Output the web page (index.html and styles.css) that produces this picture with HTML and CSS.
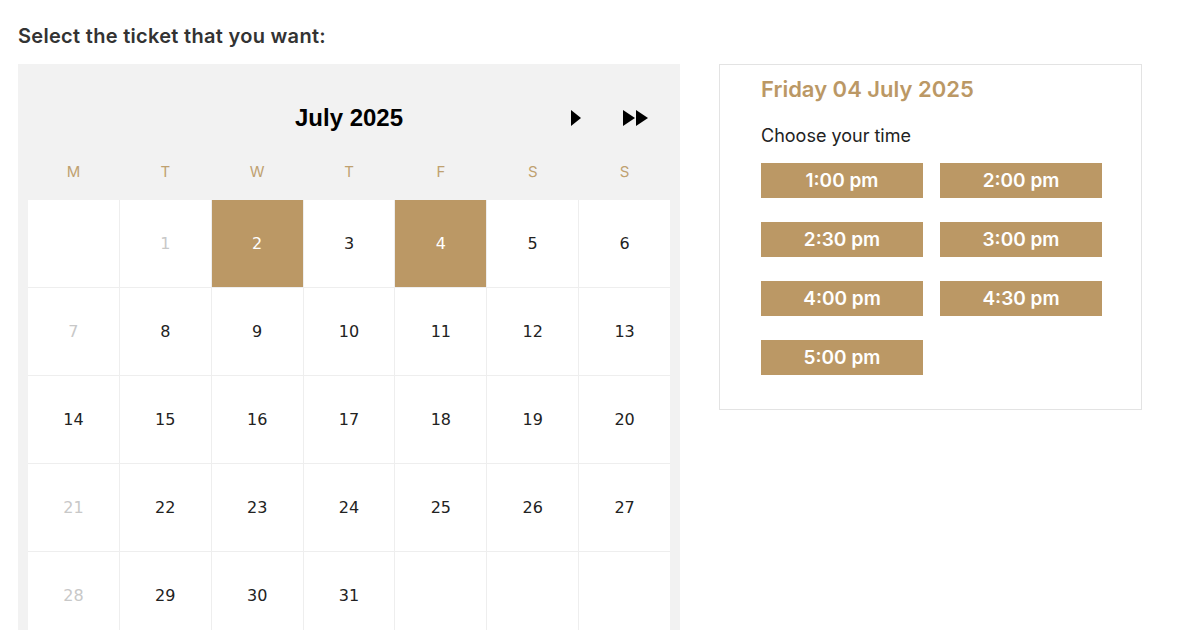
FILE: index.html
```html
<!DOCTYPE html>
<html lang="en">
<head>
    <meta charset="UTF-8">
    <meta name="viewport" content="width=device-width, initial-scale=1.0">
    <title>Tickets</title>
    <link rel="stylesheet" href="styles.css">
</head>
<body>
    <h3 class="page-title">Select the ticket that you want:</h3>

    <div class="booking">
        <div class="calendar">
            <div class="cal-header">
                <span></span>
                <h2 class="cal-month">July 2025</h2>
                <div class="cal-nav">
                    <button class="nav-btn" aria-label="Next month">
                        <svg width="10" height="16" viewBox="0 0 10 16"><path d="M0 0 L10 8 L0 16 Z" fill="#000"/></svg>
                    </button>
                    <button class="nav-btn" aria-label="Next year">
                        <svg width="25" height="16" viewBox="0 0 25 16"><path d="M0 0 L12 8 L0 16 Z M13 0 L25 8 L13 16 Z" fill="#000"/></svg>
                    </button>
                </div>
            </div>

            <div class="weekdays">
                <span>M</span><span>T</span><span>W</span><span>T</span><span>F</span><span>S</span><span>S</span>
            </div>

            <div class="days">
                <div class="day"></div>
                <div class="day disabled">1</div>
                <div class="day selected">2</div>
                <div class="day">3</div>
                <div class="day selected">4</div>
                <div class="day">5</div>
                <div class="day">6</div>

                <div class="day disabled">7</div>
                <div class="day">8</div>
                <div class="day">9</div>
                <div class="day">10</div>
                <div class="day">11</div>
                <div class="day">12</div>
                <div class="day">13</div>

                <div class="day">14</div>
                <div class="day">15</div>
                <div class="day">16</div>
                <div class="day">17</div>
                <div class="day">18</div>
                <div class="day">19</div>
                <div class="day">20</div>

                <div class="day disabled">21</div>
                <div class="day">22</div>
                <div class="day">23</div>
                <div class="day">24</div>
                <div class="day">25</div>
                <div class="day">26</div>
                <div class="day">27</div>

                <div class="day disabled">28</div>
                <div class="day">29</div>
                <div class="day">30</div>
                <div class="day">31</div>
                <div class="day"></div>
                <div class="day"></div>
                <div class="day"></div>
            </div>
        </div>

        <div class="times">
            <h2 class="times-date">Friday 04 July 2025</h2>
            <p class="times-label">Choose your time</p>
            <div class="slots">
                <button class="slot">1:00 pm</button>
                <button class="slot">2:00 pm</button>
                <button class="slot">2:30 pm</button>
                <button class="slot">3:00 pm</button>
                <button class="slot">4:00 pm</button>
                <button class="slot">4:30 pm</button>
                <button class="slot">5:00 pm</button>
            </div>
        </div>
    </div>
</body>
</html>
```

FILE: styles.css
```css
body {
    font-family: Inter, "Liberation Sans", sans-serif;
    margin: 0;
    padding: 24px 18px 0;
    background-color: #fff;
    color: #333;
}
.page-title {
    font-size: 20px;
    font-weight: 600;
    line-height: 24px;
    letter-spacing: 0.3px;
    margin: 0 0 16px;
    color: #333;
}
.booking {
    display: flex;
    align-items: flex-start;
    gap: 39px;
}

/* calendario */
.calendar {
    width: 662px;
    box-sizing: border-box;
    background-color: #f2f2f2;
    padding: 40px 10px 0;
}
.cal-header {
    display: grid;
    grid-template-columns: 1fr auto 1fr;
    align-items: center;
    height: 26px;
    margin-bottom: 16px;
}
.cal-month {
    margin: 0;
    font-family: "Liberation Sans", Arial, sans-serif;
    font-size: 24px;
    font-weight: 700;
    color: #000;
}
.cal-nav {
    display: flex;
    justify-content: flex-end;
    align-items: center;
    gap: 42px;
    padding-right: 22px;
}
.nav-btn {
    background: none;
    border: none;
    padding: 0;
    display: flex;
    cursor: pointer;
}
.weekdays {
    display: grid;
    grid-template-columns: repeat(7, 1fr);
    gap: 1px;
    height: 50px;
    align-items: center;
    margin-bottom: 4px;
}
.weekdays span {
    text-align: center;
    font-size: 15px;
    color: #bfa170;
}
.days {
    display: grid;
    grid-template-columns: repeat(7, 1fr);
    grid-auto-rows: 87px;
    gap: 1px;
    background-color: #eeeeee;
}
.day {
    background-color: #fff;
    display: flex;
    align-items: center;
    justify-content: center;
    font-family: "DejaVu Sans", Verdana, sans-serif;
    font-size: 16px;
    color: #222;
}
.day.disabled {
    color: #c8c8c8;
}
.day.selected {
    background-color: #bb9865;
    color: #fff;
}

/* horarios */
.times {
    width: 423px;
    box-sizing: border-box;
    border: 1px solid #e3e3e3;
    padding: 12px 40px 34px 41px;
}
.times-date {
    margin: 0;
    font-size: 22px;
    font-weight: 600;
    line-height: 24px;
    color: #bb9865;
}
.times-label {
    margin: 24px 0 16px;
    font-size: 18px;
    line-height: 22px;
    color: #222;
}
.slots {
    display: grid;
    grid-template-columns: 162px 162px;
    column-gap: 17px;
    row-gap: 24px;
}
.slot {
    height: 35px;
    border: none;
    background-color: #bb9865;
    color: #fff;
    font-family: Inter, "Liberation Sans", sans-serif;
    font-size: 19px;
    font-weight: 600;
    cursor: pointer;
}
```
